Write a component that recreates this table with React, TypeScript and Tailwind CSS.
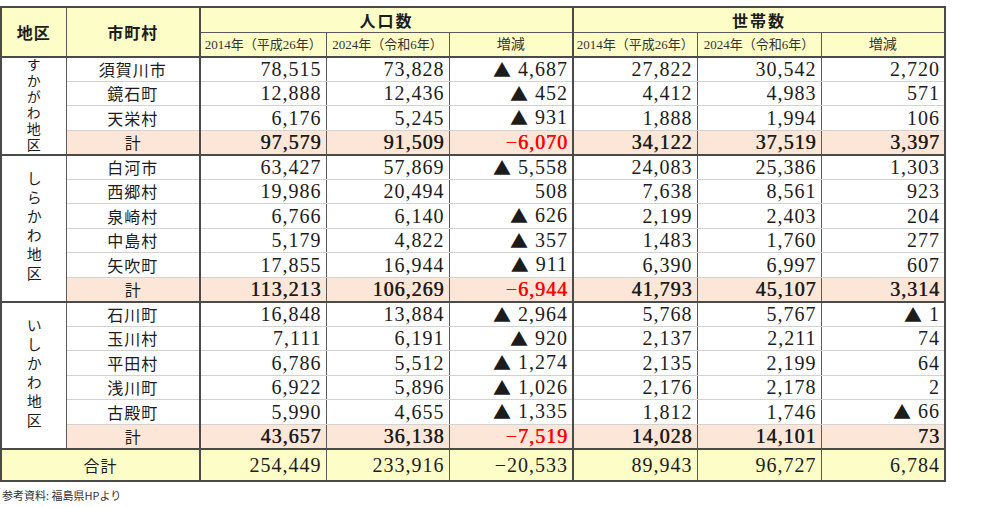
type Row = { name: string; v: string[]; neg?: boolean };

const groups: { label: string; vt: string; rows: Row[]; sum: Row }[] = [
  {
    label: 'すかがわ地区',
    vt: 'text-[14px] tracking-[2px]',
    rows: [
      { name: '須賀川市', v: ['78,515', '73,828', '▲ 4,687', '27,822', '30,542', '2,720'] },
      { name: '鏡石町', v: ['12,888', '12,436', '▲ 452', '4,412', '4,983', '571'] },
      { name: '天栄村', v: ['6,176', '5,245', '▲ 931', '1,888', '1,994', '106'] },
    ],
    sum: { name: '計', v: ['97,579', '91,509', '−6,070', '34,122', '37,519', '3,397'], neg: true },
  },
  {
    label: 'しらかわ地区',
    vt: 'text-[15px] tracking-[4px]',
    rows: [
      { name: '白河市', v: ['63,427', '57,869', '▲ 5,558', '24,083', '25,386', '1,303'] },
      { name: '西郷村', v: ['19,986', '20,494', '508', '7,638', '8,561', '923'] },
      { name: '泉崎村', v: ['6,766', '6,140', '▲ 626', '2,199', '2,403', '204'] },
      { name: '中島村', v: ['5,179', '4,822', '▲ 357', '1,483', '1,760', '277'] },
      { name: '矢吹町', v: ['17,855', '16,944', '▲ 911', '6,390', '6,997', '607'] },
    ],
    sum: { name: '計', v: ['113,213', '106,269', '−6,944', '41,793', '45,107', '3,314'], neg: true },
  },
  {
    label: 'いしかわ地区',
    vt: 'text-[15px] tracking-[4px]',
    rows: [
      { name: '石川町', v: ['16,848', '13,884', '▲ 2,964', '5,768', '5,767', '▲ 1'] },
      { name: '玉川村', v: ['7,111', '6,191', '▲ 920', '2,137', '2,211', '74'] },
      { name: '平田村', v: ['6,786', '5,512', '▲ 1,274', '2,135', '2,199', '64'] },
      { name: '浅川町', v: ['6,922', '5,896', '▲ 1,026', '2,176', '2,178', '2'] },
      { name: '古殿町', v: ['5,990', '4,655', '▲ 1,335', '1,812', '1,746', '▲ 66'] },
    ],
    sum: { name: '計', v: ['43,657', '36,138', '−7,519', '14,028', '14,101', '73'], neg: true },
  },
];

const total = ['254,449', '233,916', '−20,533', '89,943', '96,727', '6,784'];

// right border per value column (0..5)
const rightBorder = (i: number) =>
  i === 2 || i === 5 ? 'border-r-2 border-r-[#4a4a4a]' : 'border-r border-r-[#5a5a5a]';

function Num({ text, red, heavy }: { text: string; red?: boolean; heavy?: boolean }) {
  if (text.startsWith('▲')) {
    return (
      <span className="inline-flex items-center justify-end gap-[6px]">
        <span className="font-['Noto_Sans_CJK_JP',sans-serif] text-[18px] leading-none">▲</span>
        <span>{text.slice(2)}</span>
      </span>
    );
  }
  return (
    <span className={`${red ? 'text-[#ff0000]' : ''} ${heavy ? '[text-shadow:0.4px_0_0_currentColor]' : ''}`}>
      {text}
    </span>
  );
}

const serif = "font-['Liberation_Serif','Noto_Sans_CJK_JP',serif]";
const cjk = "font-['Noto_Sans_CJK_JP',sans-serif]";

export default function App() {
  return (
    <div className="w-[1000px] h-[507px] bg-white pt-[6px] text-[#1c1c1c]">
      <table className="table-fixed border-collapse border-t-2 border-l-2 border-[#4a4a4a] w-[944px]">
        <colgroup>
          <col className="w-[65px]" />
          <col className="w-[134px]" />
          <col className="w-[126px]" />
          <col className="w-[123px]" />
          <col className="w-[124px]" />
          <col className="w-[124px]" />
          <col className="w-[124px]" />
          <col className="w-[124px]" />
        </colgroup>
        <thead>
          <tr className="h-[25px] bg-[#fdfdc8]">
            <th rowSpan={2} className={`${cjk} text-[16px] font-bold tracking-[1px] border-r border-r-[#5a5a5a] border-b-2 border-b-[#4a4a4a]`}>
              地区
            </th>
            <th rowSpan={2} className={`${cjk} text-[16px] font-bold tracking-[1px] border-r-2 border-r-[#4a4a4a] border-b-2 border-b-[#4a4a4a]`}>
              市町村
            </th>
            <th colSpan={3} className={`${cjk} text-[16px] font-bold tracking-[2px] border-r-2 border-r-[#4a4a4a] border-b border-b-[#5a5a5a]`}>
              人口数
            </th>
            <th colSpan={3} className={`${cjk} text-[16px] font-bold tracking-[2px] border-r-2 border-r-[#4a4a4a] border-b border-b-[#5a5a5a]`}>
              世帯数
            </th>
          </tr>
          <tr className="h-[24px] bg-[#fdfdc8]">
            {['2014年（平成26年）', '2024年（令和6年）', '増減', '2014年（平成26年）', '2024年（令和6年）', '増減'].map((h, i) => (
              <th
                key={i}
                className={`${serif} ${h === '増減' ? 'text-[14px]' : 'text-[13px]'} font-normal text-[#333] whitespace-nowrap ${rightBorder(i)} border-b-2 border-b-[#4a4a4a]`}
              >
                {h}
              </th>
            ))}
          </tr>
        </thead>
        <tbody>
          {groups.map((g, gi) => (
            <>
              {g.rows.map((r, ri) => (
                <tr key={`${gi}-${ri}`} className="h-[24.5px] bg-white">
                  {ri === 0 && (
                    <td
                      rowSpan={g.rows.length + 1}
                      className="border-r border-r-[#5a5a5a] border-b-2 border-b-[#4a4a4a] align-middle"
                    >
                      <div className="flex justify-center">
                        <div className={`${cjk} ${g.vt} leading-[20px] [writing-mode:vertical-rl] [text-orientation:upright]`}>
                          {g.label}
                        </div>
                      </div>
                    </td>
                  )}
                  <td className={`${cjk} text-[16px] tracking-[1px] text-center leading-[22px] border-r-2 border-r-[#4a4a4a] border-b border-b-[#d2d2d2]`}>
                    {r.name}
                  </td>
                  {r.v.map((v, i) => (
                    <td
                      key={i}
                      className={`${serif} text-[20px] tracking-[1px] leading-[22px] text-right pr-[4px] ${rightBorder(i)} border-b border-b-[#d2d2d2]`}
                    >
                      <Num text={v} />
                    </td>
                  ))}
                </tr>
              ))}
              <tr key={`${gi}-sum`} className="h-[24.5px] bg-[#fce6d8]">
                <td className={`${cjk} text-[16px] text-center leading-[22px] border-r-2 border-r-[#4a4a4a] border-b-2 border-b-[#4a4a4a]`}>
                  {g.sum.name}
                </td>
                {g.sum.v.map((v, i) => (
                  <td
                    key={i}
                    className={`${serif} text-[20px] tracking-[1px] leading-[22px] text-right pr-[4px] ${rightBorder(i)} border-b-2 border-b-[#4a4a4a]`}
                  >
                    <Num text={v} red={i === 2} heavy />
                  </td>
                ))}
              </tr>
            </>
          ))}
          <tr className="h-[32px] bg-[#fdfdc8]">
            <td colSpan={2} className={`${cjk} text-[16px] tracking-[1px] text-center border-r-2 border-r-[#4a4a4a] border-b-2 border-b-[#4a4a4a]`}>
              合計
            </td>
            {total.map((v, i) => (
              <td
                key={i}
                className={`${serif} text-[20px] tracking-[1px] leading-[22px] text-right pr-[4px] ${rightBorder(i)} border-b-2 border-b-[#4a4a4a]`}
              >
                <Num text={v} />
              </td>
            ))}
          </tr>
        </tbody>
      </table>
      <p className={`${cjk} text-[11px] text-[#333] mt-[6px] pl-[2px] leading-[14px]`}>参考資料: 福島県HPより</p>
    </div>
  );
}
